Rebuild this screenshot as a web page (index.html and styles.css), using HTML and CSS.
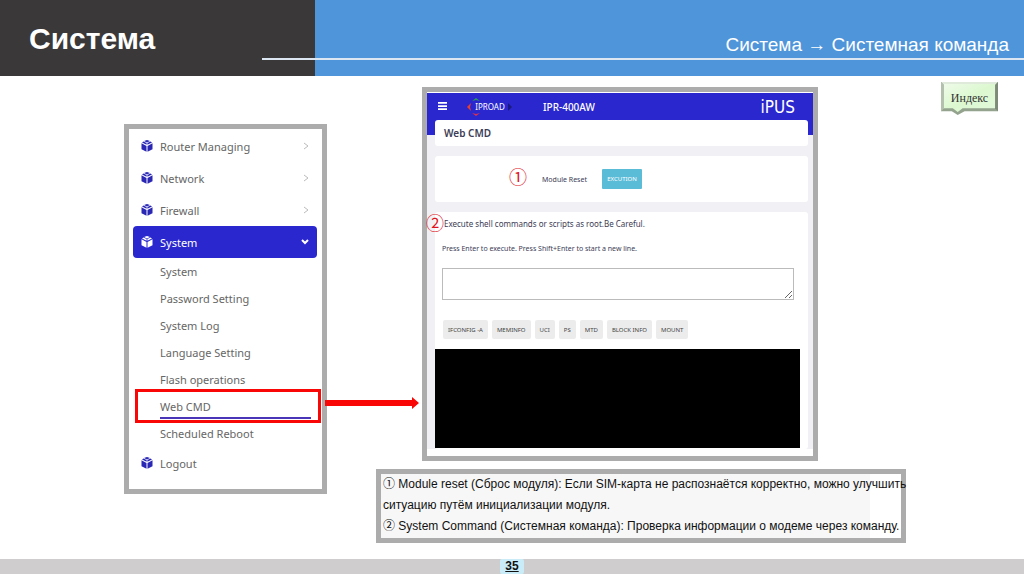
FILE: index.html
```html
<!DOCTYPE html>
<html lang="ru">
<head>
  <meta charset="UTF-8">
  <meta name="viewport" content="width=device-width, initial-scale=1">
  <title>Система</title>
  <link rel="stylesheet" href="styles.css">
</head>
<body>
  <!-- cube icon used by the menu -->
  <svg class="defs" width="0" height="0">
    <symbol id="cube" viewBox="0 0 12 12">
      <path d="M6 0 L9 1 L6 2.500 L3 1 Z"/>
      <path d="M2.500 1.400 L5.600 3 V4.800 L1 2.600 Z M9.500 1.400 L6.400 3 V4.800 L11 2.600 Z"/>
      <path d="M0.5 3.3 L5.5 5.9 V11.8 L0.5 9.2 Z"/>
      <path d="M11.5 3.3 L6.5 5.9 V11.8 L11.5 9.2 Z"/>
    </symbol>
  </svg>

  <header class="top">
    <h1>Система</h1>
    <p class="path">Система → Системная команда</p>
  </header>

  <main>
    <nav class="sidebar">
      <ul class="menu">
        <li><a href="#"><svg class="cube"><use href="#cube"/></svg>Router Managing<svg class="chev" viewBox="0 0 6 8"><path d="M1 1 L5 4 L1 7"/></svg></a></li>
        <li><a href="#"><svg class="cube"><use href="#cube"/></svg>Network<svg class="chev" viewBox="0 0 6 8"><path d="M1 1 L5 4 L1 7"/></svg></a></li>
        <li><a href="#"><svg class="cube"><use href="#cube"/></svg>Firewall<svg class="chev" viewBox="0 0 6 8"><path d="M1 1 L5 4 L1 7"/></svg></a></li>
        <li>
          <a href="#" class="active"><svg class="cube"><use href="#cube"/></svg>System<svg class="chev" viewBox="0 0 8 6"><path d="M1 1 L4 4 L7 1"/></svg></a>
          <ul class="submenu">
            <li><a href="#">System</a></li>
            <li><a href="#">Password Setting</a></li>
            <li><a href="#">System Log</a></li>
            <li><a href="#">Language Setting</a></li>
            <li><a href="#">Flash operations</a></li>
            <li class="current">
              <a href="#">Web CMD</a>
              <svg class="arrow" viewBox="0 0 94 14"><path d="M0 4 H87 V1 L94 7 L87 13 V10 H0 Z"/></svg>
            </li>
            <li><a href="#">Scheduled Reboot</a></li>
          </ul>
        </li>
        <li><a href="#"><svg class="cube"><use href="#cube"/></svg>Logout</a></li>
      </ul>
    </nav>

    <div class="content">
      <section class="screen">
        <div class="app">
          <div class="topbar">
            <button class="burger" aria-label="Menu"><svg viewBox="0 0 10 9"><path d="M0 1 H10 M0 4.500 H10 M0 8 H10"/></svg></button>
            <span class="brand">
              <svg viewBox="0 0 46 20">
                <path fill="#e8402a" d="M4 6 L0 10 L4 14 L3 10 Z"/>
                <path fill="#2a9a5a" d="M5 4 L9 1 L13 4 L9 3 Z"/>
                <path fill="#d83050" d="M5 16 L9 19 L13 16 L9 17 Z"/>
                <path fill="#1a1a80" d="M41 6 L45 10 L41 14 Z"/>
              </svg>
              IPROAD
            </span>
            <span class="model">IPR-400AW</span>
            <span class="ipus">iPUS</span>
          </div>
          <h2 class="card">Web CMD</h2>
          <div class="card reset">
            <span class="num">①</span>
            <span class="label">Module Reset</span>
            <button class="exec">EXCUTION</button>
          </div>
          <div class="card shell">
            <span class="num num2">②</span>
            <p>Execute shell commands or scripts as root.Be Careful.</p>
            <label for="cmd">Press Enter to execute. Press Shift+Enter to start a new line.</label>
            <textarea id="cmd"></textarea>
            <div class="buttons">
              <button>IFCONFIG -A</button>
              <button>MEMINFO</button>
              <button>UCI</button>
              <button>PS</button>
              <button>MTD</button>
              <button>BLOCK INFO</button>
              <button>MOUNT</button>
            </div>
            <div class="console"></div>
          </div>
        </div>
      </section>

      <section class="notes">
        <p>① Module reset (Сброс модуля): Если SIM-карта не распознаётся корректно, можно улучшить<br>ситуацию путём инициализации модуля.</p>
        <p>② System Command (Системная команда): Проверка информации о модеме через команду.</p>
      </section>
    </div>

    <a href="#" class="index">
      <svg viewBox="0 0 58 35" preserveAspectRatio="none">
        <defs>
          <linearGradient id="face" x1="0" y1="0" x2="1" y2="1">
            <stop offset="0" stop-color="#eefbe8"/>
            <stop offset="0.5" stop-color="#dcf8d0"/>
            <stop offset="1" stop-color="#e2f8da"/>
          </linearGradient>
        </defs>
        <path fill="#94a38e" d="M0 0 H58 V30 H24 L17 34 L11 30 H0 Z"/>
        <path fill="#dfeadb" d="M0 0 H58 L55 3 H3 Z"/>
        <path fill="#b3c0ad" d="M0 0 L3 3 V27 L0 30 Z"/>
        <path fill="#7d8a78" d="M58 0 L55 3 V27 L58 30 Z"/>
        <path fill="url(#face)" d="M3 2 H55 V27 H22 L17 31 L12 27 H3 Z"/>
      </svg>
      <span>Индекс</span>
    </a>
  </main>

  <footer><span class="page">35</span></footer>
</body>
</html>
```

FILE: styles.css
```css
* {
  box-sizing: border-box;
}

body {
  margin: 0;
  min-height: 100vh;
  display: flex;
  flex-direction: column;
  background: #fff;
  font-family: "Liberation Sans", Arial, "Noto Sans CJK SC", sans-serif;
  color: #111;
}

h1, h2, p, ul {
  margin: 0;
  padding: 0;
}

ul {
  list-style: none;
}

a {
  color: inherit;
  text-decoration: none;
}

button {
  border: none;
  padding: 0;
  font-family: inherit;
  cursor: pointer;
}

.defs {
  position: absolute;
}

/* header */
.top {
  position: relative;
  display: flex;
  height: 76px;
  color: #fff;
}

.top::after {
  content: "";
  position: absolute;
  left: 262px;
  right: 0;
  top: 58px;
  height: 2px;
  background: #dce6f2;
}

.top h1 {
  width: 315px;
  padding-left: 29px;
  background: #3b383a;
  font-size: 30px;
  line-height: 78px;
}

.path {
  flex: 1;
  padding: 33px 15px 0 0;
  background: #4f95da;
  font-size: 19px;
  line-height: 24px;
  text-align: right;
}

main {
  flex: 1;
  display: grid;
  grid-template-columns: 252fr 530fr 92fr;
  align-items: start;
  padding: 6px 26px 16px 124px;
}

/* left menu */
.sidebar {
  margin: 42px 49px 0 0;
  padding: 1px 5px 10px 4px;
  border: 5px solid #acacac;
  font-family: "Noto Sans", "Open Sans", sans-serif;
  font-size: 11px;
  color: #666;
}

.menu > li > a {
  display: flex;
  align-items: center;
  height: 32px;
  padding: 0 8px;
  border-radius: 4px;
}

.cube {
  width: 12px;
  height: 12px;
  margin-right: 7px;
  fill: #2a27b5;
}

.chev {
  width: 6px;
  height: 8px;
  margin-left: auto;
  fill: none;
  stroke: #bbb;
}

.menu > li > .active {
  background: #2a27cf;
  color: #fff;
}

.active .cube {
  fill: #fff;
}

.active .chev {
  width: 8px;
  height: 6px;
  stroke: #fff;
  stroke-width: 2;
}

.submenu a {
  display: block;
  margin: 0 6px 0 27px;
  line-height: 27px;
}

.current {
  position: relative;
}

.current a {
  height: 26px;
  margin-bottom: 1px;
  border-bottom: 2px solid #4a35b8;
}

.current::after {
  content: "";
  position: absolute;
  inset: -4px -4px -4px 2px;
  border: 3px solid #f90606;
}

.arrow {
  position: absolute;
  left: calc(100% + 8px);
  top: 3px;
  width: 94px;
  height: 14px;
  fill: #f90606;
}

/* right side */
.content {
  min-width: 0;
}

.screen {
  margin: 5px 88px 8px 46px;
  padding: 1px 0 7px;
  border: 5px solid #acacac;
  font-family: "Noto Sans", "Open Sans", sans-serif;
}

.app {
  padding: 0 5px 0 8px;
  background: linear-gradient(#2a27cf 42px, #f1f1f5 42px);
  color: #3c3c55;
}

.topbar {
  display: flex;
  align-items: center;
  height: 27px;
  padding: 0 13px 0 3px;
  color: #fff;
}

.burger {
  display: flex;
  width: 9px;
  background: none;
}

.burger svg {
  width: 100%;
  stroke: #fff;
  stroke-width: 2;
}

.brand {
  position: relative;
  width: 46px;
  margin-left: 20px;
  font-size: 8px;
  text-align: center;
}

.brand svg {
  position: absolute;
  inset: -4px 0 0;
}

.model {
  margin-left: 30px;
  font-size: 10px;
  font-weight: 500;
}

.ipus {
  margin-left: auto;
  font-family: "Liberation Sans Narrow", "DejaVu Sans Condensed", sans-serif;
  font-size: 17px;
}

.card {
  background: #fff;
  border-radius: 3px;
}

h2.card {
  padding-left: 9px;
  font-size: 10px;
  font-weight: 600;
  line-height: 26px;
}

.reset {
  display: flex;
  align-items: center;
  height: 46px;
  margin: 10px 0;
  padding-left: 74px;
}

.num {
  color: #e0141e;
  font-family: "Noto Sans CJK SC", sans-serif;
  font-size: 18px;
  line-height: 18px;
}

.reset .num {
  padding-bottom: 6px;
}

.label {
  width: 60px;
  margin-left: 15px;
  font-size: 7px;
}

.exec {
  width: 40px;
  height: 20px;
  border-radius: 1px;
  background: #5bbcd8;
  color: #fff;
  font-size: 6px;
}

.shell {
  position: relative;
  padding: 5px 7px 1px;
  font-size: 8px;
  line-height: 14px;
}

.num2 {
  position: absolute;
  left: -9px;
  top: 1px;
}

.shell p {
  padding-left: 2px;
}

.shell label {
  display: block;
  margin: 11px 0 12px;
  font-size: 7px;
}

.shell textarea {
  display: block;
  width: calc(100% - 7px);
  height: 32px;
  border: 1px solid #bbb;
}

.buttons {
  display: flex;
  gap: 4px;
  margin: 20px 0 10px 1px;
}

.buttons button {
  height: 19px;
  padding: 0 5px;
  border-radius: 2px;
  background: #ececec;
  color: #444;
  font-size: 6px;
}

.console {
  height: 99px;
  margin: 0 1px 0 -7px;
  background: #000;
}

/* notes under the screen */
.notes {
  padding: 0 0 1px 2px;
  border: 5px solid #acacac;
  background: linear-gradient(90deg, #f7f7f7 94%, #fff 94%);
  font-size: 12px;
  line-height: 21px;
  white-space: nowrap;
}

.index {
  position: relative;
  height: 34px;
  margin-left: 35px;
  color: #333;
  font-family: "Liberation Serif", serif;
  font-size: 12px;
  line-height: 32px;
  text-align: center;
}

.index svg {
  position: absolute;
  left: 0;
  top: 0;
  width: 100%;
  height: 100%;
}

.index span {
  position: relative;
}

footer {
  height: 15px;
  background: #cfcdce;
  text-align: center;
}

.page {
  display: inline-block;
  width: 24px;
  border-radius: 2px;
  background: #c9ecf8;
  font-size: 12px;
  font-weight: bold;
  line-height: 15px;
  text-decoration: underline;
  vertical-align: top;
}
```
